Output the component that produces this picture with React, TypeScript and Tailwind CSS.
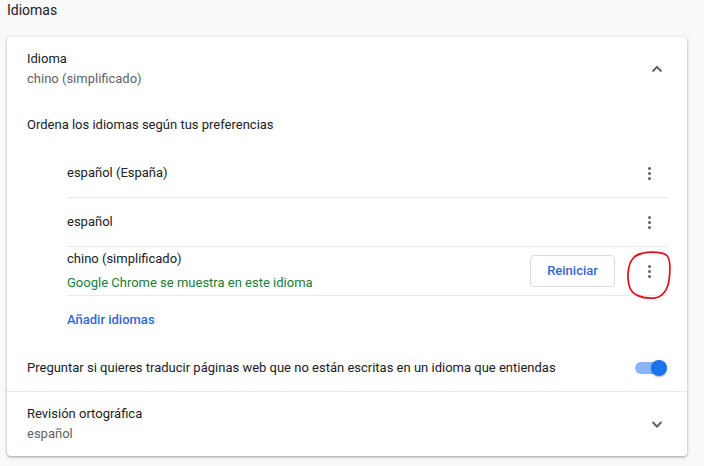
import React from "react";

const languages = [
  { name: "español (España)" },
  { name: "español" },
  { name: "chino (simplificado)", note: "Google Chrome se muestra en este idioma", current: true },
];

const Dots = () => (
  <div className="w-[38px] h-[38px] flex flex-col items-center justify-center gap-[2px]">
    <span className="w-[3px] h-[3px] rounded-full bg-[#5f6368]"></span>
    <span className="w-[3px] h-[3px] rounded-full bg-[#5f6368]"></span>
    <span className="w-[3px] h-[3px] rounded-full bg-[#5f6368]"></span>
  </div>
);

const Chevron = ({ up }: { up?: boolean }) => (
  <svg className="w-[20px] h-[20px]" viewBox="0 0 20 20" fill="none">
    <path
      d={up ? "M5.5 12.5 L10 8 L14.5 12.5" : "M5.5 8 L10 12.5 L14.5 8"}
      stroke="#5f6368"
      strokeWidth="2"
    />
  </svg>
);

export default function App() {
  return (
    <div className="min-h-[466px] bg-[#f8f9fa] pl-[7px] pr-[17px] text-[13px] text-[#202124] font-['Roboto',sans-serif]">
      <div className="h-[20px] leading-[20px] text-[14px] text-[#202124]">Idiomas</div>

      <div className="mt-[17px] bg-white rounded-[4px] shadow-[0_1px_2px_rgba(60,64,67,0.3),0_1px_3px_1px_rgba(60,64,67,0.15)]">
        {/* Idioma header */}
        <div className="h-[64px] px-5 flex items-center justify-between">
          <div className="leading-[20px]">
            <div>Idioma</div>
            <div className="text-[#5f6368]">chino (simplificado)</div>
          </div>
          <Chevron up />
        </div>

        <div className="h-[48px] px-5 flex items-center">Ordena los idiomas según tus preferencias</div>

        {/* Language list */}
        <div className="ml-[60px] mr-[19px]">
          {languages.map((lang) => (
            <div key={lang.name} className="h-[49px] border-b border-[#e8eaed] flex items-center justify-between">
              <div className="leading-[24px]">
                <div>{lang.name}</div>
                {lang.note && <div className="text-[#188038]">{lang.note}</div>}
              </div>
              <div className="flex items-center">
                {lang.current && (
                  <button className="w-[85px] h-[32px] mr-[15px] border border-[#dadce0] rounded-[4px] bg-white text-[#3367d6] font-medium">
                    Reiniciar
                  </button>
                )}
                <div className="relative">
                  <Dots />
                  {lang.current && (
                    <svg
                      className="absolute left-[-3px] top-[-2px] w-[46px] h-[52px] pointer-events-none"
                      viewBox="0 0 48 54"
                      fill="none"
                    >
                      <path
                        d="M10 6 C18 1 34 1 41 5 C46 9 45 22 44 30 C43 40 38 49 28 50 C16 51 4 47 2 36 C0 27 1 15 6 9 C9 5 14 3 18 3"
                        stroke="#e0101c"
                        strokeWidth="1.8"
                        strokeLinecap="round"
                      />
                    </svg>
                  )}
                </div>
              </div>
            </div>
          ))}
          <div className="h-[48px] flex items-center text-[#3367d6] font-medium">Añadir idiomas</div>
        </div>

        {/* Translate toggle */}
        <div className="h-[48px] px-5 flex items-center justify-between border-b border-[#e8eaed]">
          <span>Preguntar si quieres traducir páginas web que no están escritas en un idioma que entiendas</span>
          <div className="relative w-[32px] h-[16px] flex items-center">
            <div className="w-[28px] h-[12px] rounded-full bg-[#8ab4f8]"></div>
            <div className="absolute right-0 w-[16px] h-[16px] rounded-full bg-[#1a73e8] shadow-[0_1px_2px_rgba(0,0,0,0.3)]"></div>
          </div>
        </div>

        {/* Spell check */}
        <div className="h-[64px] px-5 flex items-center justify-between">
          <div className="leading-[20px]">
            <div>Revisión ortográfica</div>
            <div className="text-[#5f6368]">español</div>
          </div>
          <Chevron />
        </div>
      </div>
    </div>
  );
}
